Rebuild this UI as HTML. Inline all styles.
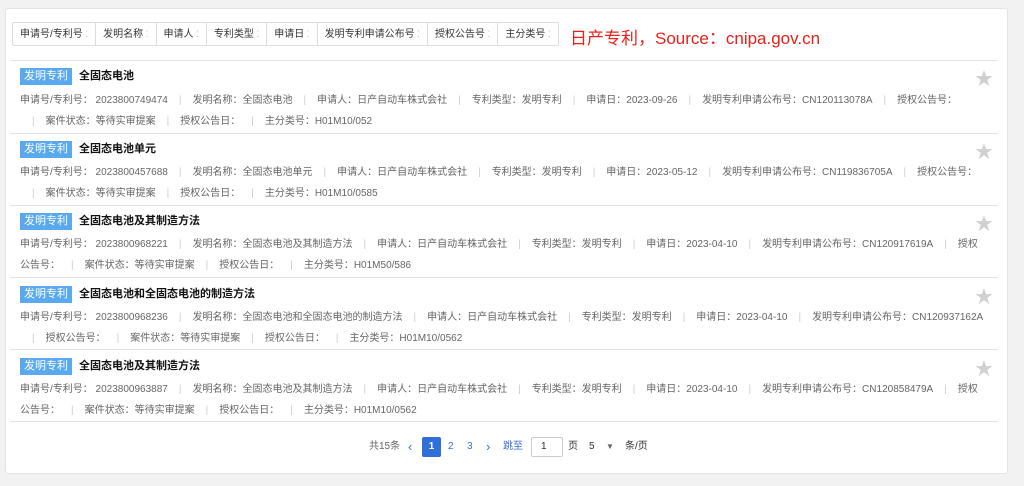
<!DOCTYPE html>
<html><head><meta charset="utf-8"><style>
*{margin:0;padding:0;box-sizing:border-box}
body{width:1024px;height:486px;background:#f2f2f2;font-family:"Liberation Sans","Noto Sans CJK SC",sans-serif;position:relative;overflow:hidden}
.card{position:absolute;left:5px;top:8px;width:1003px;height:466px;background:#fff;border:1px solid #e4e4e4;border-radius:3px}
.filters{position:absolute;left:12px;top:22px;height:24px;display:flex;border:1px solid #ddd;border-radius:2px}
.filters div{font-size:10px;color:#333;padding:0 7px;line-height:22px;border-right:1px solid #ddd;white-space:nowrap}
.filters div:last-child{border-right:none}
.filters div:after{content:" ⁚";color:#bbb;font-size:9px}
.src{position:absolute;left:570px;top:24px;color:#e8211b;font-size:17px}
.hr{position:absolute;left:10px;width:988px;height:1px;background:#e3e3e3}
.tag{position:absolute;left:20px;height:17px;width:52px;background:#5aa9ef;color:#fff;font-size:11px;line-height:17px;text-align:center}
.tt{position:absolute;left:79px;font-size:11px;font-weight:bold;color:#111;line-height:17px}
.ln{position:absolute;font-size:10px;color:#666;white-space:nowrap;line-height:12px}
.ln i{font-style:normal;color:#ccc;padding:0 11px}
.star{position:absolute;left:975px;color:#d0d0d0;font-size:18px;line-height:18px}
.pg{position:absolute;top:437px;font-size:10px;color:#666;line-height:20px}
</style></head><body>
<div class="card"></div>
<div class="filters"><div>申请号/专利号</div><div>发明名称</div><div>申请人</div><div>专利类型</div><div>申请日</div><div>发明专利申请公布号</div><div>授权公告号</div><div>主分类号</div></div>
<div class="src">日产专利，Source：cnipa.gov.cn</div>
<div class="hr" style="top:60px"></div>

<div class="tag" style="top:68px">发明专利</div><div class="tt" style="top:68px">全固态电池</div><div class="star" style="top:70px">★</div>
<div class="ln" style="left:20px;top:95px">申请号/专利号：&nbsp;2023800749474<i>|</i>发明名称：全固态电池<i>|</i>申请人：日产自动车株式会社<i>|</i>专利类型：发明专利<i>|</i>申请日：2023-09-26<i>|</i>发明专利申请公布号：CN120113078A<i>|</i>授权公告号：</div>
<div class="ln" style="left:21px;top:116px"><i>|</i>案件状态：等待实审提案<i>|</i>授权公告日：<i>|</i>主分类号：H01M10/052</div>
<div class="hr" style="top:133px"></div>

<div class="tag" style="top:141px">发明专利</div><div class="tt" style="top:141px">全固态电池单元</div><div class="star" style="top:143px">★</div>
<div class="ln" style="left:20px;top:167px">申请号/专利号：&nbsp;2023800457688<i>|</i>发明名称：全固态电池单元<i>|</i>申请人：日产自动车株式会社<i>|</i>专利类型：发明专利<i>|</i>申请日：2023-05-12<i>|</i>发明专利申请公布号：CN119836705A<i>|</i>授权公告号：</div>
<div class="ln" style="left:21px;top:188px"><i>|</i>案件状态：等待实审提案<i>|</i>授权公告日：<i>|</i>主分类号：H01M10/0585</div>
<div class="hr" style="top:205px"></div>

<div class="tag" style="top:213px">发明专利</div><div class="tt" style="top:213px">全固态电池及其制造方法</div><div class="star" style="top:215px">★</div>
<div class="ln" style="left:20px;top:239px">申请号/专利号：&nbsp;2023800968221<i>|</i>发明名称：全固态电池及其制造方法<i>|</i>申请人：日产自动车株式会社<i>|</i>专利类型：发明专利<i>|</i>申请日：2023-04-10<i>|</i>发明专利申请公布号：CN120917619A<i>|</i>授权</div>
<div class="ln" style="left:20px;top:260px">公告号：<i>|</i>案件状态：等待实审提案<i>|</i>授权公告日：<i>|</i>主分类号：H01M50/586</div>
<div class="hr" style="top:277px"></div>

<div class="tag" style="top:286px">发明专利</div><div class="tt" style="top:286px">全固态电池和全固态电池的制造方法</div><div class="star" style="top:288px">★</div>
<div class="ln" style="left:20px;top:312px">申请号/专利号：&nbsp;2023800968236<i>|</i>发明名称：全固态电池和全固态电池的制造方法<i>|</i>申请人：日产自动车株式会社<i>|</i>专利类型：发明专利<i>|</i>申请日：2023-04-10<i>|</i>发明专利申请公布号：CN120937162A</div>
<div class="ln" style="left:21px;top:333px"><i>|</i>授权公告号：<i>|</i>案件状态：等待实审提案<i>|</i>授权公告日：<i>|</i>主分类号：H01M10/0562</div>
<div class="hr" style="top:349px"></div>

<div class="tag" style="top:358px">发明专利</div><div class="tt" style="top:358px">全固态电池及其制造方法</div><div class="star" style="top:360px">★</div>
<div class="ln" style="left:20px;top:384px">申请号/专利号：&nbsp;2023800963887<i>|</i>发明名称：全固态电池及其制造方法<i>|</i>申请人：日产自动车株式会社<i>|</i>专利类型：发明专利<i>|</i>申请日：2023-04-10<i>|</i>发明专利申请公布号：CN120858479A<i>|</i>授权</div>
<div class="ln" style="left:20px;top:405px">公告号：<i>|</i>案件状态：等待实审提案<i>|</i>授权公告日：<i>|</i>主分类号：H01M10/0562</div>
<div class="hr" style="top:421px"></div>

<div class="pg" style="left:369px">共15条</div>
<div class="pg" style="left:408px;color:#3d6fd1;font-size:13px">‹</div>
<div class="pg" style="left:422px;width:19px;height:20px;background:#2f6fd6;color:#fff;border-radius:2px;text-align:center;font-weight:bold">1</div>
<div class="pg" style="left:448px;color:#3d6fd1">2</div>
<div class="pg" style="left:467px;color:#3d6fd1">3</div>
<div class="pg" style="left:486px;color:#3d6fd1;font-size:13px">›</div>
<div class="pg" style="left:503px;color:#3d6fd1">跳至</div>
<div class="pg" style="left:531px;width:32px;height:20px;border:1px solid #ccc;border-radius:2px;padding-left:9px;color:#333;line-height:18px">1</div>
<div class="pg" style="left:568px;color:#333">页</div>
<div class="pg" style="left:589px;color:#333">5</div>
<div class="pg" style="left:606px;color:#666;font-size:8px">▼</div>
<div class="pg" style="left:625px;color:#333">条/页</div>
</body></html>
